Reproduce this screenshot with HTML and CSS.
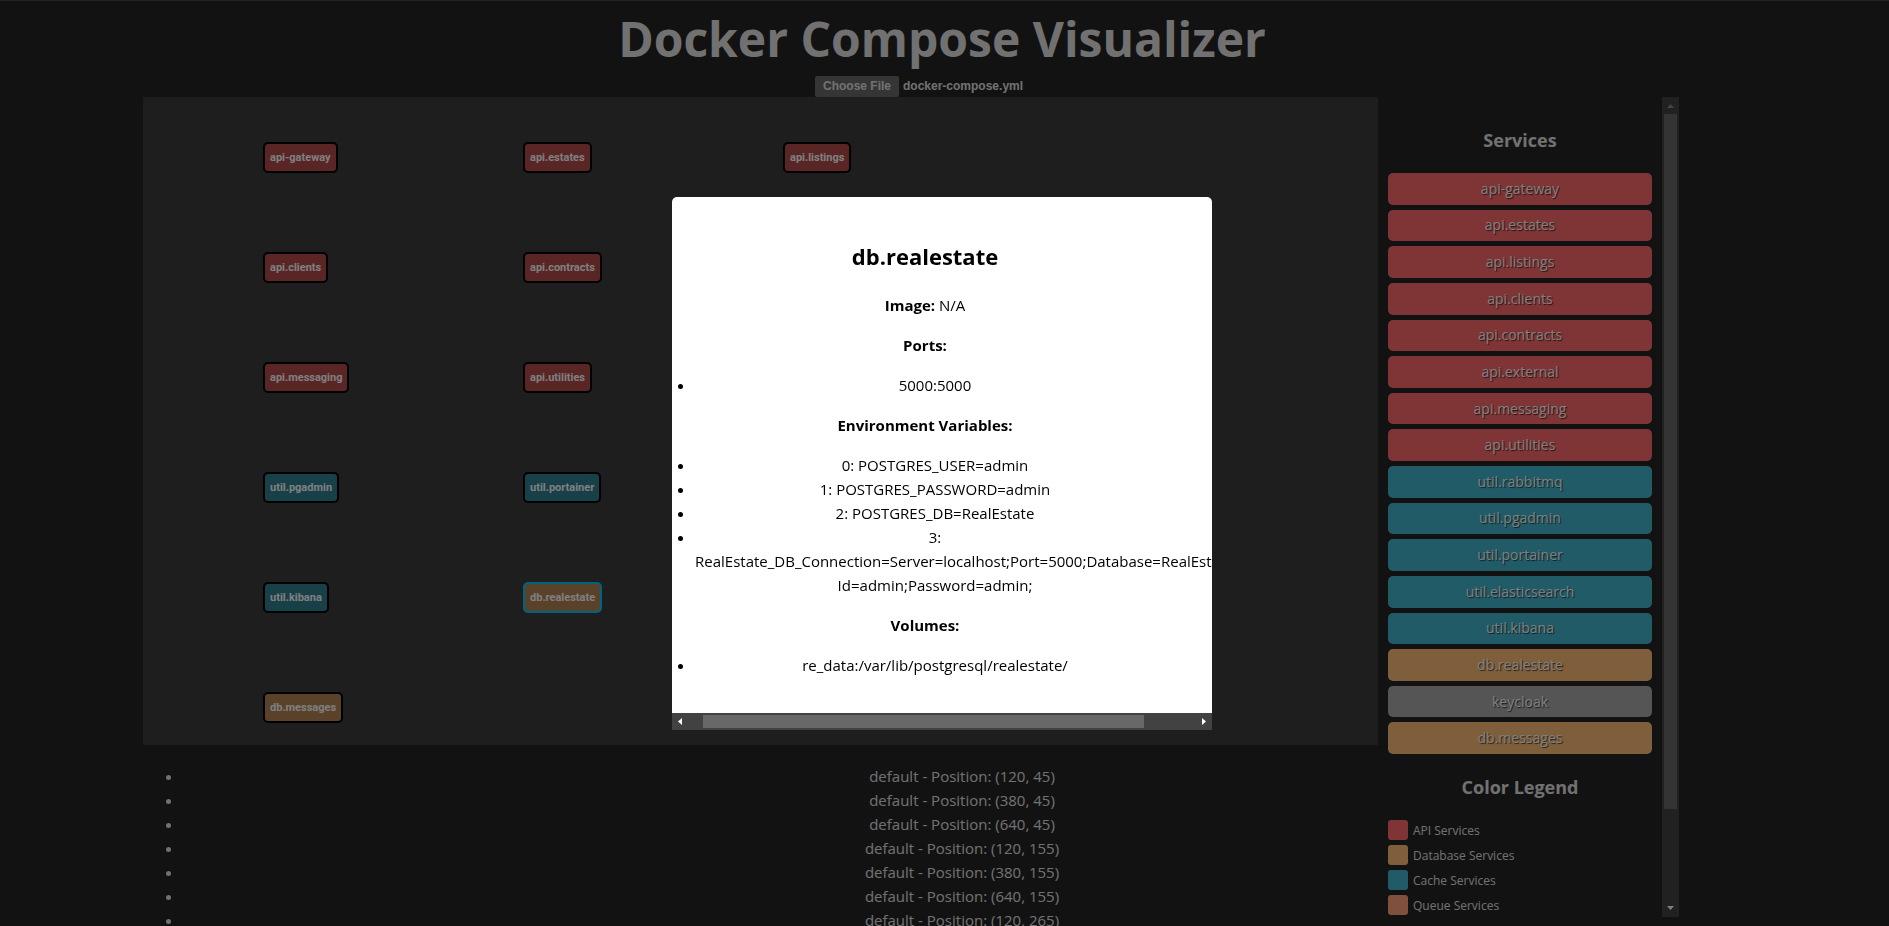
FILE: index.html
```html
<!DOCTYPE html>
<html lang="en">
<head>
<meta charset="utf-8">
<title>Docker Compose Visualizer</title>
<link rel="stylesheet" href="styles.css">
</head>
<body>
<div class="page">
  <header class="header">
    <h1 class="title">Docker Compose Visualizer</h1>
    <input class="file-input" id="compose-file" type="file" aria-label="Compose file">
  </header>
  <main>
    <div class="workspace">
      <section class="canvas" id="canvas"></section>
      <aside class="sidebar">
        <div class="sidebar-content">
          <h3 class="sidebar-title">Services</h3>
          <div class="services">
            <button class="service api">api-gateway</button>
            <button class="service api">api.estates</button>
            <button class="service api">api.listings</button>
            <button class="service api">api.clients</button>
            <button class="service api">api.contracts</button>
            <button class="service api">api.external</button>
            <button class="service api">api.messaging</button>
            <button class="service api">api.utilities</button>
            <button class="service cache">util.rabbitmq</button>
            <button class="service cache">util.pgadmin</button>
            <button class="service cache">util.portainer</button>
            <button class="service cache">util.elasticsearch</button>
            <button class="service cache">util.kibana</button>
            <button class="service database">db.realestate</button>
            <button class="service other">keycloak</button>
            <button class="service database">db.messages</button>
          </div>
          <h3 class="sidebar-title">Color Legend</h3>
          <div class="legend">
            <div class="legend-item"><span class="swatch api"></span><span>API Services</span></div>
            <div class="legend-item"><span class="swatch database"></span><span>Database Services</span></div>
            <div class="legend-item"><span class="swatch cache"></span><span>Cache Services</span></div>
            <div class="legend-item"><span class="swatch queue"></span><span>Queue Services</span></div>
          </div>
        </div>
        <div class="vscroll">
          <svg class="arrow dim" viewBox="0 0 17 17"><path d="M5 11L8.500 7L12 11Z"/></svg>
          <div class="vtrack"><div class="vthumb"></div></div>
          <svg class="arrow" viewBox="0 0 17 17"><path d="M5 6L8.500 10L12 6Z"/></svg>
        </div>
      </aside>
    </div>
    <ul class="positions">
      <li>default - Position: (120, 45)</li>
      <li>default - Position: (380, 45)</li>
      <li>default - Position: (640, 45)</li>
      <li>default - Position: (120, 155)</li>
      <li>default - Position: (380, 155)</li>
      <li>default - Position: (640, 155)</li>
      <li>default - Position: (120, 265)</li>
    </ul>
  </main>
</div>
<div class="overlay">
  <div class="modal" role="dialog" aria-labelledby="modal-title">
    <div class="modal-view">
      <div class="modal-body">
        <h2 class="modal-title" id="modal-title">db.realestate</h2>
        <p><strong>Image:</strong> N/A</p>
        <p><strong>Ports:</strong></p>
        <ul>
          <li>5000:5000</li>
        </ul>
        <p><strong>Environment Variables:</strong></p>
        <ul>
          <li>0: POSTGRES_USER=admin</li>
          <li>1: POSTGRES_PASSWORD=admin</li>
          <li>2: POSTGRES_DB=RealEstate</li>
          <li>3: RealEstate_DB_Connection=Server=localhost;Port=5000;Database=RealEstate;User Id=admin;Password=admin;</li>
        </ul>
        <p><strong>Volumes:</strong></p>
        <ul>
          <li>re_data:/var/lib/postgresql/realestate/</li>
        </ul>
      </div>
    </div>
    <div class="hscroll">
      <svg class="arrow" viewBox="0 0 17 17"><path d="M10 5L6 8.500L10 12Z"/></svg>
      <div class="htrack"><div class="hthumb"></div></div>
      <svg class="arrow" viewBox="0 0 17 17"><path d="M7 5L11 8.500L7 12Z"/></svg>
    </div>
  </div>
</div>
<script src="app.js"></script>
</body>
</html>
```

FILE: app.js
```js
const nodes = [
  { name: "api-gateway", kind: "api", x: 120, y: 45 },
  { name: "api.estates", kind: "api", x: 380, y: 45 },
  { name: "api.listings", kind: "api", x: 640, y: 45 },
  { name: "api.clients", kind: "api", x: 120, y: 155 },
  { name: "api.contracts", kind: "api", x: 380, y: 155 },
  { name: "api.messaging", kind: "api", x: 120, y: 265 },
  { name: "api.utilities", kind: "api", x: 380, y: 265 },
  { name: "util.pgadmin", kind: "cache", x: 120, y: 375 },
  { name: "util.portainer", kind: "cache", x: 380, y: 375 },
  { name: "util.kibana", kind: "cache", x: 120, y: 485 },
  { name: "db.realestate", kind: "database", x: 380, y: 485, selected: true },
  { name: "db.messages", kind: "database", x: 120, y: 595 },
];

const canvas = document.getElementById("canvas");
for (const node of nodes) {
  const el = document.createElement("button");
  el.className = `node node-${node.kind}${node.selected ? " selected" : ""}`;
  el.textContent = node.name;
  el.style.left = `${node.x}px`;
  el.style.top = `${node.y}px`;
  canvas.append(el);
}

const transfer = new DataTransfer();
transfer.items.add(new File([""], "docker-compose.yml"));
document.getElementById("compose-file").files = transfer.files;
```

FILE: styles.css
```css
* {
  box-sizing: border-box;
}

body {
  margin: 0;
  height: 100vh;
  overflow: hidden;
  background: #242424;
  border-top: 1px solid #3c4a50;
  color: #e2e2e2;
  font: 15px/24px "Open Sans", "Noto Sans", sans-serif;
}

.page {
  padding: 0 148px 0 143px;
  text-align: center;
}

.header {
  display: flex;
  flex-direction: column;
  align-items: center;
  gap: 4px;
  padding-top: 5px;
}

.title {
  margin: 0;
  font-size: 48px;
  line-height: 66px;
}

.file-input {
  width: 254px;
  height: 21px;
  font: bold 12px/15px "Liberation Sans", Arial, sans-serif;
}

.file-input::file-selector-button {
  height: 21px;
  margin-right: 4px;
  padding: 1px 8px;
  border: 0;
  border-radius: 2px;
  background: #6b6b6b;
  color: #e2e2e2;
  font: inherit;
}

.workspace {
  display: flex;
  align-items: flex-start;
  height: 70vh;
  padding-right: 62px;
}

.canvas {
  position: relative;
  flex: 1;
  height: 100%;
  background: #3c3c3c;
}

.node {
  position: absolute;
  padding: 8px 5px;
  border: 2px solid #000;
  border-radius: 5px;
  color: #fff;
  font: bold 11px/11px Roboto, Arial, sans-serif;
}

.node-api {
  background: #b24b4b;
}

.node-cache {
  background: #308092;
}

.node-database {
  background: #b28553;
}

.node.selected {
  border-color: #00c8ff;
}

.sidebar {
  display: flex;
  width: 301px;
  height: calc(100vh - 106px);
}

.sidebar-content {
  flex: 1;
  padding: 10px;
  overflow: hidden;
}

.sidebar-title {
  margin: 19px 0;
  font-size: 18px;
  line-height: 28px;
}

.services {
  display: grid;
  grid-auto-rows: 1fr;
  gap: 5px;
  min-height: 581px;
}

.service {
  padding: 0;
  border: 0;
  border-radius: 5px;
  color: #fff;
  font: 500 14px/22px "Open Sans", "Noto Sans", sans-serif;
  text-shadow: 1px 1px 1px rgba(0, 0, 0, 0.7);
}

.api {
  background: #ff6b6b;
}

.cache {
  background: #45b7d1;
}

.database {
  background: #ffbe76;
}

.queue {
  background: #ffa07a;
}

.other {
  background: #aaa;
}

.legend {
  display: flex;
  flex-direction: column;
  gap: 5px;
}

.legend-item {
  display: flex;
  align-items: center;
  gap: 5px;
  font-size: 12px;
  line-height: 20px;
}

.legend-item span:last-child {
  padding-top: 2px;
  line-height: 18px;
}

.swatch {
  width: 20px;
  height: 20px;
  border-radius: 3px;
}

.vscroll {
  display: flex;
  flex-direction: column;
  width: 17px;
  background: #424242;
}

.vtrack {
  flex: 1;
  padding: 0 2px;
}

.vthumb {
  height: 695px;
  max-height: 100%;
  background: #686868;
}

.arrow {
  display: block;
  width: 17px;
  height: 17px;
  fill: #fff;
}

.arrow.dim {
  fill: #8a8a8a;
}

.positions {
  margin: 19px 0 0;
  padding-left: 40px;
}

.overlay {
  position: fixed;
  inset: 0;
  display: flex;
  align-items: center;
  justify-content: center;
  padding: 1px 5px 0 0;
  background: rgba(0, 0, 0, 0.5);
}

.modal {
  width: 540px;
  overflow: hidden;
  border-radius: 5px 5px 0 0;
  background: #fff;
  color: #000;
  text-align: center;
}

.modal-view {
  padding: 40px 0 20px 3px;
  overflow: hidden;
}

.modal-body {
  width: 500px;
}

.modal-body p {
  margin: 16px 0;
}

.modal-body ul {
  margin: 16px 0;
  padding-left: 20px;
}

.modal-body .modal-title {
  margin: 0 0 18px;
  font-size: 22px;
  line-height: 38px;
}

.hscroll {
  display: flex;
  height: 17px;
  background: #424242;
}

.htrack {
  flex: 1;
  padding: 2px 14px;
}

.hthumb {
  width: 441px;
  height: 13px;
  background: #686868;
}
```
